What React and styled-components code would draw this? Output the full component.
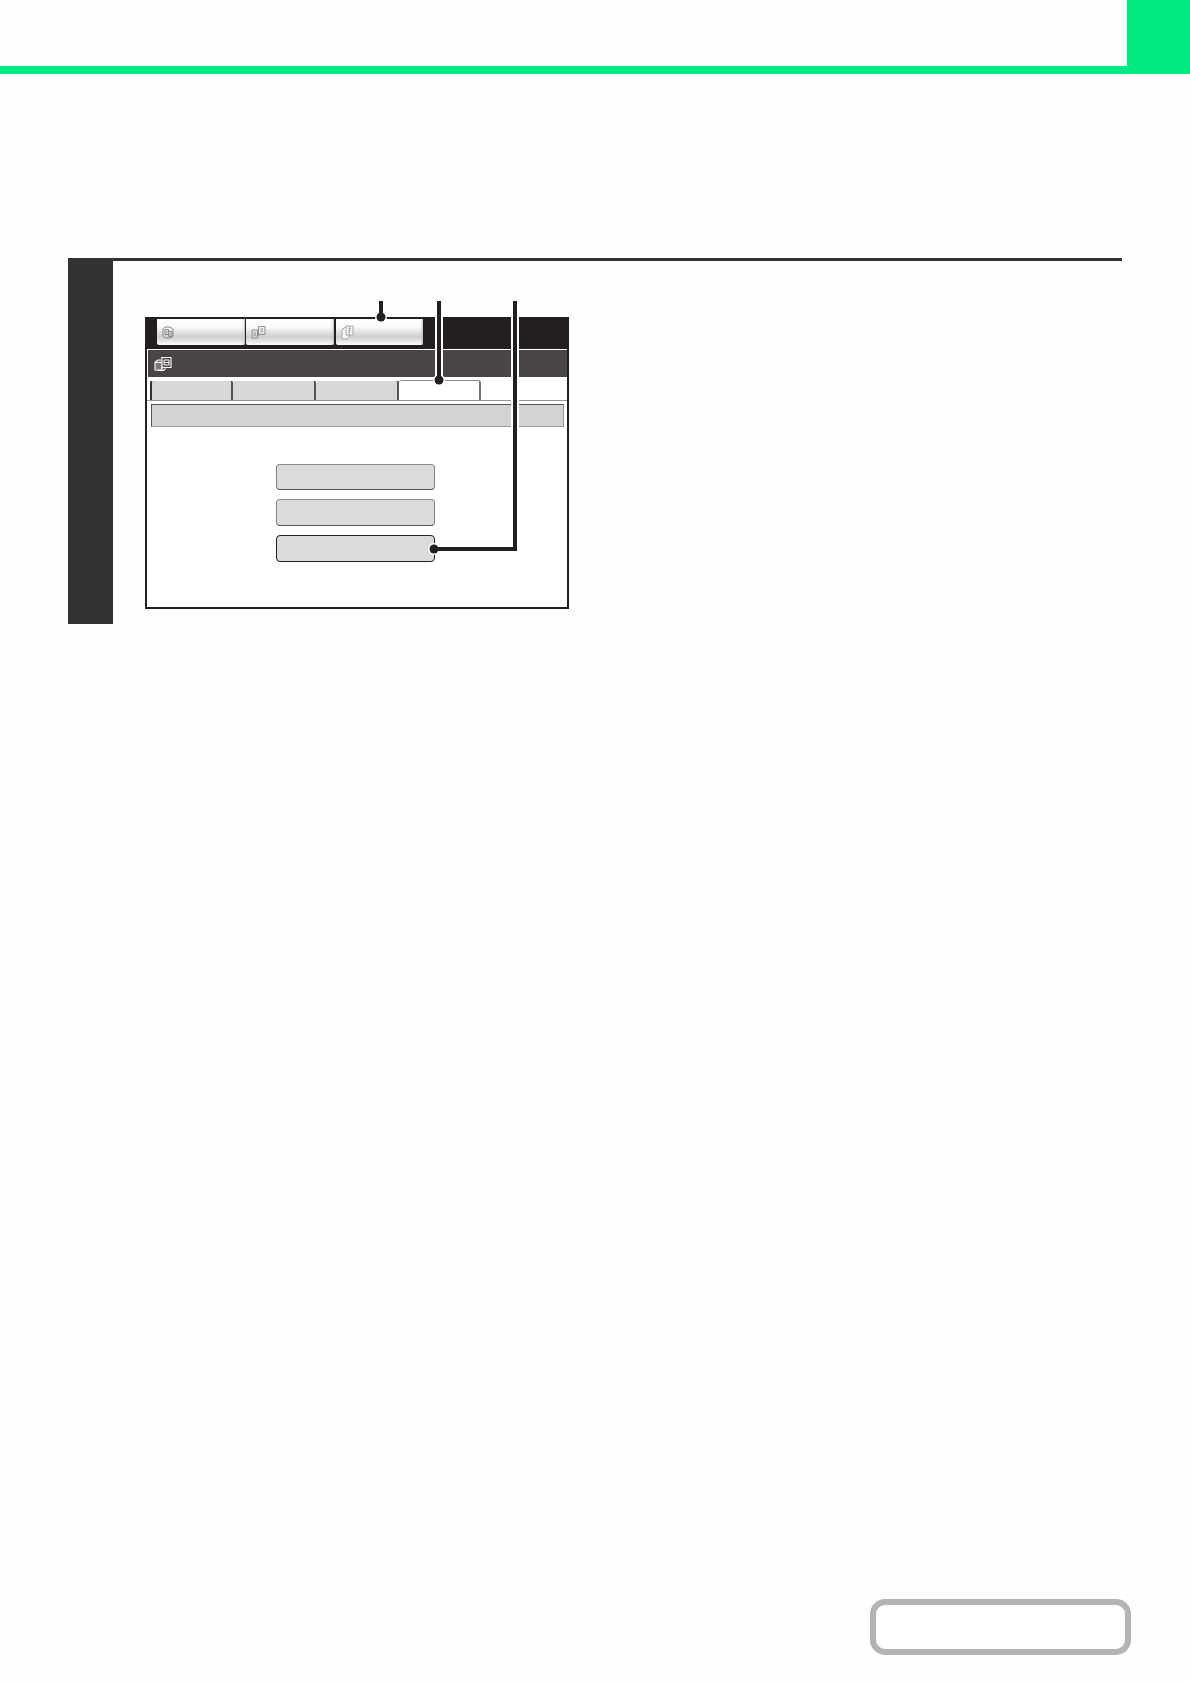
import React from "react";
import styled, { createGlobalStyle } from "styled-components";

const GlobalStyle = createGlobalStyle`
  html, body {
    margin: 0;
    padding: 0;
    background: #fefefe;
    font-family: "Liberation Sans", Arial, sans-serif;
  }
`;

const Page = styled.div`
  width: 1190px;
  height: 1684px;
  display: flex;
  flex-direction: column;
  background: #fefefe;
  overflow: hidden;
`;

const Header = styled.header`
  display: flex;
  height: 74px;
  flex: none;
`;
const HeaderRule = styled.div`
  width: 1127px;
  box-sizing: border-box;
  border-bottom: 8px solid #00ea84;
`;
const HeaderTab = styled.div`
  flex: 1;
  background: #00ea84;
`;
const GhostStrip = styled.div`
  height: 16px;
  margin: 6px 50px 0 15px;
  background: #fbfefb;
  flex: none;
`;

const Step = styled.section`
  display: flex;
  width: 1054px;
  height: 366px;
  margin: 162px 0 0 68px;
  flex: none;
`;
const StepBar = styled.div`
  width: 45px;
  background: #333333;
`;
const StepBody = styled.div`
  flex: 1;
  border-top: 3px solid #333333;
  padding: 56px 0 0 32px;
`;

const ScreenWrap = styled.div`
  position: relative;
  width: 424px;
`;
const Screen = styled.div`
  box-sizing: border-box;
  width: 424px;
  height: 292px;
  border: 2px solid #231f20;
  background: #fff;
`;
const Switcher = styled.div`
  display: flex;
  gap: 1px;
  height: 30px;
  box-sizing: border-box;
  padding: 0 0 4px 10px;
  background: #231f20;
`;
const ModeButton = styled.div`
  display: flex;
  align-items: center;
  box-sizing: border-box;
  width: ${(p) => p.$w}px;
  padding-left: 5px;
  border-radius: 0 0 2px 2px;
  background: linear-gradient(
    to bottom,
    #ffffff 0%,
    #fafafa 30%,
    #cfcfcf 68%,
    #e4e4e4 85%,
    #ffffff 100%
  );
  box-shadow: inset -2px 0 2px -1px #bbbbbb;

  &:last-child {
    margin-left: 1px;
  }
`;
const TitleBand = styled.div`
  display: flex;
  align-items: center;
  height: 27px;
  margin: 1px 0 0 1px;
  padding-left: 6px;
  background: #4a4445;
`;
const TabRow = styled.div`
  display: flex;
  height: 21px;
  box-sizing: border-box;
  margin-top: 3px;
  padding-left: 3px;
  border-bottom: 1px solid #999999;
`;
const Tab = styled.div`
  box-sizing: border-box;
  width: ${(p) => p.$w}px;
  height: 20px;
  border-top: 1px solid ${(p) => (p.$active ? "#8a8a8a" : "#ffffff")};
  border-left: ${(p) => (p.$first ? "2px solid #333333" : "none")};
  border-right: 2px solid ${(p) => (p.$active ? "#777777" : "#555555")};
  border-radius: 3px 3px 0 0;
  background: ${(p) => (p.$active ? "#ffffff" : "#d8d8d8")};
`;
const HeadingBar = styled.div`
  box-sizing: border-box;
  height: 23px;
  margin: 3px 3px 0 4px;
  background: #d3d3d3;
  border: 1px solid #999999;
  border-top-color: #555555;
  border-left-color: #555555;
`;
const OptionList = styled.div`
  display: flex;
  flex-direction: column;
  gap: 9px;
  width: 159px;
  margin: 37px 0 0 129px;
`;
const OptionButton = styled.div`
  box-sizing: border-box;
  height: ${(p) => p.$h}px;
  border: 1px solid ${(p) => (p.$selected ? "#231f20" : "#808080")};
  border-top-color: ${(p) => (p.$selected ? "#231f20" : "#8c8c8c")};
  border-bottom: 1.5px solid ${(p) => (p.$selected ? "#231f20" : "#555555")};
  border-radius: 4px;
  background: #dbdbdb;
`;

const Leaders = styled.svg`
  position: absolute;
  left: 0;
  top: -20px;
  overflow: visible;
`;

const FooterBox = styled.div`
  box-sizing: border-box;
  width: 261px;
  height: 56px;
  margin: auto 59px 29px auto;
  border: 6px solid #b4b4b4;
  border-radius: 15px;
  background: #fff;
`;

// the three mode icons in the top row, plus the larger one in the title band
function CopyIcon() {
  return (
    <svg width="12" height="13" viewBox="0 0 12 13" fill="none" stroke="#8a8a8a" strokeWidth="1">
      <path d="M1 3l2-2h5l3 2v7l-2 2H3l-2-2z" />
      <path d="M3 3.5h3.5v5H3zM6.5 5.5H10v5H6.5z" />
      <path d="M4 5.5h1.5M4 7h1.5M7.5 7.5H9M7.5 9H9" strokeWidth="0.8" />
    </svg>
  );
}

function PagesIcon() {
  return (
    <svg width="15" height="14" viewBox="0 0 15 14" fill="none" stroke="#8f8f8f" strokeWidth="1">
      <path d="M1 5h5.5v8H1z" />
      <path d="M7.5 1.5H14v8H8" />
      <path d="M7.5 1.5V11" />
      <path d="M9.5 4H12M9.5 6H12M2.5 8H5M2.5 10H5" />
    </svg>
  );
}

function StackIcon() {
  return (
    <svg width="13" height="15" viewBox="0 0 13 15" fill="#f6f6f6" stroke="#a8a8a8" strokeWidth="1">
      <path d="M1 4.5l3-2h4v9l-2 2.5H1z" />
      <path d="M5 1h7v9H5z" />
      <path d="M7 3.5h3M7 5.5h3M7 7.5h2M8.5 1v9" strokeWidth="0.8" />
    </svg>
  );
}

function BoxIcon() {
  return (
    <svg width="18" height="16" viewBox="0 0 18 16" fill="none" stroke="#ffffff" strokeWidth="1.1">
      <path d="M1 6l3-2h4v10H1z" fill="#7a7576" />
      <path d="M1 6.5h7" />
      <path d="M3.5 14.5h6l2-2" />
      <path d="M7 1.5h10v10H8" fill="#4a4445" />
      <path d="M8 1.5v11" />
      <path d="M10 4h5v5h-5zM10 6.5h5" strokeWidth="1" />
    </svg>
  );
}

function ScreenLeaders() {
  return (
    <Leaders width="424" height="300" viewBox="0 0 424 300" fill="none">
      <g stroke="#ffffff" strokeWidth="8">
        <path d="M294 20V83" />
        <path d="M370 20V252" />
      </g>
      <circle cx="236" cy="20" r="6" fill="#ffffff" />
      <circle cx="294" cy="83" r="6" fill="#ffffff" />
      <circle cx="289" cy="252" r="6" fill="#ffffff" />
      <g stroke="#231f20" strokeWidth="4">
        <path d="M236 4V20" />
        <path d="M294 4V83" />
        <path d="M370 4V252H289" />
      </g>
      <circle cx="236" cy="20" r="4.5" fill="#231f20" />
      <circle cx="294" cy="83" r="4.5" fill="#231f20" />
      <circle cx="289" cy="252" r="4.5" fill="#231f20" />
    </Leaders>
  );
}

export default function App() {
  return (
    <Page>
      <GlobalStyle />
      <Header>
        <HeaderRule />
        <HeaderTab />
      </Header>
      <GhostStrip />
      <Step>
        <StepBar />
        <StepBody>
          <ScreenWrap>
            <Screen>
              <Switcher>
                <ModeButton $w={88}>
                  <CopyIcon />
                </ModeButton>
                <ModeButton $w={88}>
                  <PagesIcon />
                </ModeButton>
                <ModeButton $w={87}>
                  <StackIcon />
                </ModeButton>
              </Switcher>
              <TitleBand>
                <BoxIcon />
              </TitleBand>
              <TabRow>
                <Tab $w={83} $first />
                <Tab $w={83} />
                <Tab $w={83} />
                <Tab $w={82} $active />
              </TabRow>
              <HeadingBar />
              <OptionList>
                <OptionButton $h={26} />
                <OptionButton $h={27} />
                <OptionButton $h={27} $selected />
              </OptionList>
            </Screen>
            <ScreenLeaders />
          </ScreenWrap>
        </StepBody>
      </Step>
      <FooterBox />
    </Page>
  );
}
